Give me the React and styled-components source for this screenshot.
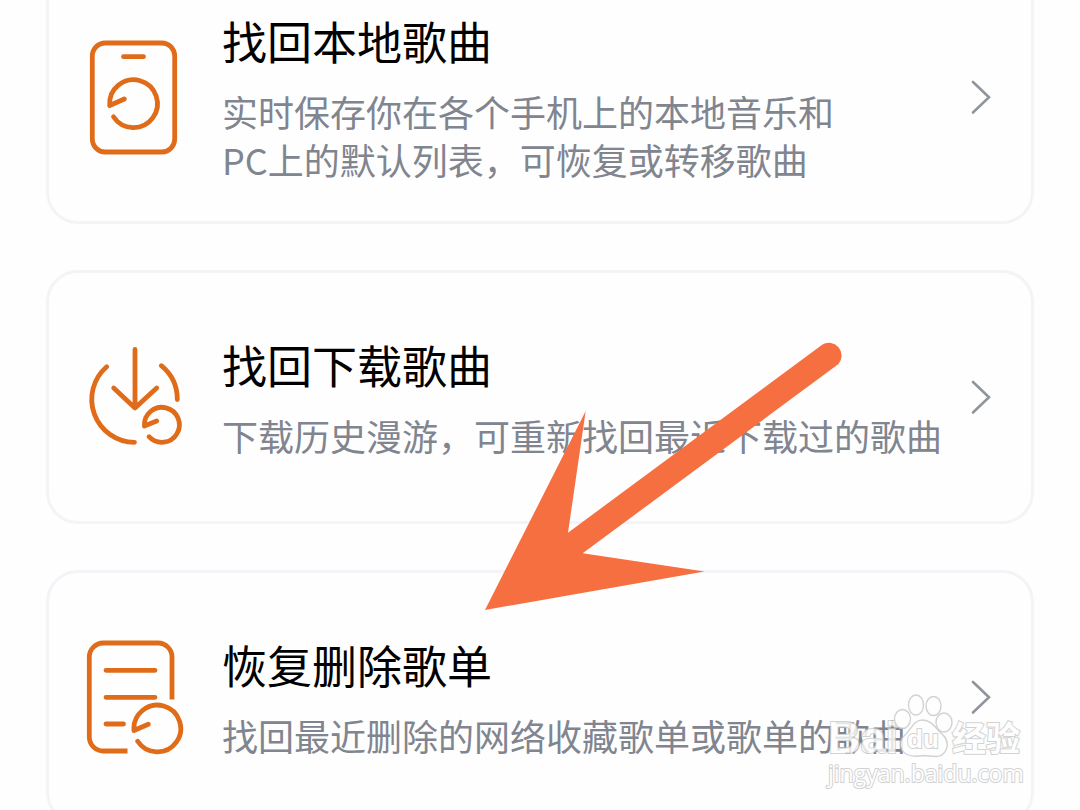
import styled, { createGlobalStyle } from "styled-components";

const items = [
    {
        id: "local",
        icon: <LocalIcon />,
        title: "找回本地歌曲",
        lines: ["实时保存你在各个手机上的本地音乐和", "PC上的默认列表，可恢复或转移歌曲"]
    },
    {
        id: "download",
        icon: <DownloadIcon />,
        title: "找回下载歌曲",
        lines: ["下载历史漫游，可重新找回最近下载过的歌曲"]
    },
    {
        id: "playlist",
        icon: <PlaylistIcon />,
        title: "恢复删除歌单",
        lines: ["找回最近删除的网络收藏歌单或歌单的歌曲"]
    }
];

function LocalIcon(){
    return (
        <Icon viewBox="0 0 100 120" aria-hidden="true">
            <rect x="6.3" y="6" width="82.4" height="109" rx="13" />
            <path d="M37.5 19.7H57.5" />
            <path d="M38.3 62L23.7 68.5A23.9 23.9 0 1 1 27.5 79.7" />
        </Icon>
    )
}

function DownloadIcon(){
    return (
        <Icon viewBox="0 0 100 120" aria-hidden="true">
            <path d="M49 12.5V70.5M27.7 51L49 71L70.7 51" />
            <path d="M20.7 29.7A43 43 0 0 0 48.5 105.3" />
            <path d="M75.3 28.7A43.5 43.5 0 0 1 91.3 62.5" />
            <path d="M70.7 84L58.4 89A17.5 17.5 0 1 1 63 99.7" />
        </Icon>
    )
}

function PlaylistIcon(){
    return (
        <Icon viewBox="0 0 100 120" aria-hidden="true">
            <path strokeLinecap="butt" d="M86 62.5V20A14 14 0 0 0 72 6H17.3A14 14 0 0 0 3.3 20V100A14 14 0 0 0 17.3 114H41.5" />
            <path d="M20 33.3H69M20 60.3H69M20 87H37.5" />
            <path d="M62.3 87.3L48 93.5A23.4 23.4 0 1 1 51.7 104.3" />
        </Icon>
    )
}

function Item({icon, title, lines}){
    return (
        <Card href="#">
            {icon}
            <Texts>
                <Title>{title}</Title>
                {lines.map(line => <Description key={line}>{line}</Description>)}
            </Texts>
            <Chevron viewBox="0 0 24 40" aria-hidden="true">
                <path d="M3 5L19 20.3L3 35.5" />
            </Chevron>
        </Card>
    )
}

function Watermark(){
    return (
        <Mark>
            <Brand>
                <Latin>Bai</Latin>
                <Paw>
                    <svg viewBox="0 0 60 64" aria-hidden="true">
                        <ellipse cx="8.5" cy="25" rx="8" ry="9.5" />
                        <ellipse cx="22" cy="11" rx="7.5" ry="10" />
                        <ellipse cx="39.5" cy="12" rx="7.5" ry="9.5" />
                        <ellipse cx="50" cy="28.5" rx="8" ry="9.5" />
                        <path d="M28.5 26C20 26 18 34 12 40C6 45 5 51 8 56C12 63 20 63 29 61.5C37 61.5 45 65 50 59C55 53 54 46 49 41C42 35 38 26 28.5 26Z" />
                    </svg>
                    <Du>du</Du>
                </Paw>
                <Chinese>经验</Chinese>
            </Brand>
            <Site>jingyan.baidu.com</Site>
        </Mark>
    )
}

export default function App(){
    return (
        <Page>
            <GlobalStyle />
            <List>
                {items.map(item => <Item key={item.id} {...item} />)}
            </List>
            <Pointer viewBox="0 0 358 269" aria-hidden="true">
                <path d="M0 268L100.7 69L83 190.7L337.5 2.5A12.8 12.8 0 0 1 353.5 22L97.7 211.3L219.5 229.5Z" />
            </Pointer>
            <Watermark />
        </Page>
    )
}

const GlobalStyle = createGlobalStyle`
    * {
        box-sizing: border-box;
    }
    body {
        margin: 0;
        background: #FEFEFE;
        font-family: "Noto Sans CJK SC", sans-serif;
    }
`;

const Page = styled.main`
    position: relative;
    height: 100vh;
    overflow: hidden;
`;

const List = styled.div`
    display: flex;
    flex-direction: column;
    gap: 46px;
    margin-top: -30px;
    padding: 0 46px;
`;

const Card = styled.a`
    display: flex;
    align-items: center;
    gap: 36px;
    min-height: 254px;
    padding: 0 37px;
    border: 3px solid #F4F4F8;
    border-radius: 32px;
    text-decoration: none;
`;

const Icon = styled.svg`
    flex: none;
    width: 100px;
    height: 120px;
    fill: none;
    stroke: #E06C1A;
    stroke-width: 4.8;
    stroke-linecap: round;
    stroke-linejoin: round;
`;

const Texts = styled.div`
    flex: 1;
    min-width: 0;
    padding-bottom: 5px;
    white-space: nowrap;
`;

const Title = styled.h2`
    margin: 0 0 11px;
    color: #000000;
    font-size: 45px;
    font-weight: 400;
    line-height: 70px;
`;

const Description = styled.p`
    margin: 0;
    color: #808590;
    font-size: 36px;
    line-height: 48px;
`;

const Chevron = styled.svg`
    flex: none;
    width: 24px;
    height: 40px;
    fill: none;
    stroke: #90959D;
    stroke-width: 2.6;
    stroke-linecap: round;
`;

const Pointer = styled.svg`
    position: absolute;
    top: 342px;
    left: 485px;
    width: 358px;
    height: 269px;
    fill: #F66F40;
`;

const Mark = styled.div`
    position: absolute;
    right: 58px;
    bottom: 20px;
    width: 194px;
    color: #FFFFFF;
    opacity: 0.8;
    paint-order: stroke fill;
    -webkit-text-stroke: 2px #C8C8C8;
    white-space: nowrap;
`;

const Brand = styled.div`
    display: flex;
    align-items: flex-end;
    height: 64px;
`;

const Latin = styled.span`
    width: 66px;
    font: bold 45px/40px "Liberation Sans", sans-serif;
`;

const Paw = styled.span`
    position: relative;
    width: 58px;
    height: 64px;
    svg {
        width: 60px;
        height: 64px;
        overflow: visible;
        fill: #FFFFFF;
        stroke: #C8C8C8;
        stroke-width: 1.4;
        paint-order: normal;
    }
`;

const Du = styled.span`
    position: absolute;
    left: 13px;
    bottom: 4px;
    font: bold 26px/30px "Liberation Sans", sans-serif;
`;

const Chinese = styled.span`
    font-size: 34px;
    font-weight: 700;
    line-height: 42px;
`;

const Site = styled.div`
    height: 32px;
    font: 23px/30px "Open Sans", sans-serif;
`;
